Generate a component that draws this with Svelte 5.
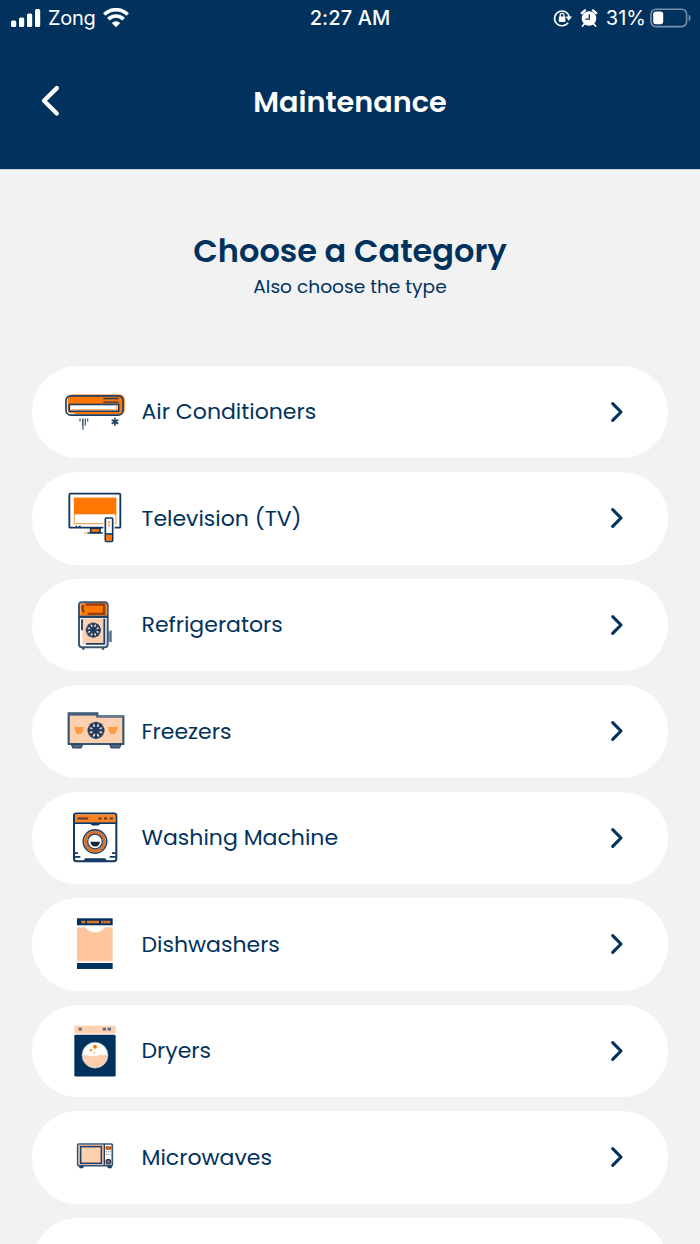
<script lang="ts">
	type Category = { name: string; icon: string; viewBox: string };

	const categories: Category[] = [
		{ name: 'Air Conditioners', icon: 'ac', viewBox: '0 -2.4 240 198' },
		{ name: 'Television (TV)', icon: 'tv', viewBox: '0 2.1 240 198' },
		{ name: 'Refrigerators', icon: 'fridge', viewBox: '0 0.6 240 198' },
		{ name: 'Freezers', icon: 'freezer', viewBox: '0 -3.9 240 198' },
		{ name: 'Washing Machine', icon: 'washer', viewBox: '0 0.6 240 198' },
		{ name: 'Dishwashers', icon: 'dishwasher', viewBox: '0 5.1 240 198' },
		{ name: 'Dryers', icon: 'dryer', viewBox: '0 0.6 240 198' },
		{ name: 'Microwaves', icon: 'microwave', viewBox: '0 -15.9 240 198' }
	];
</script>

{#snippet snowflake(cx: number, cy: number, r: number)}
	<g transform="translate({cx} {cy}) scale({r / 24})" stroke="#1f3f66" stroke-width="5" fill="none">
		<circle r="10" fill="#1f3f66" stroke="none" />
		{#each [0, 45, 90, 135, 180, 225, 270, 315] as angle}
			<path d="M0 0V-23M-7 -21L0 -15L7 -21" transform="rotate({angle})" />
		{/each}
	</g>
{/snippet}

<div class="screen">
	<div class="status-bar">
		<div class="carrier">
			<svg width="30" height="20" viewBox="0 0 30 20" fill="#fff">
				<rect x="0" y="12.5" width="5.2" height="6.5" rx="1.5" />
				<rect x="8" y="9.5" width="5.2" height="9.5" rx="1.5" />
				<rect x="16" y="5.5" width="5.2" height="13.5" rx="1.5" />
				<rect x="24" y="1" width="5.2" height="18" rx="1.5" />
			</svg>
			<span>Zong</span>
			<svg width="26" height="20" viewBox="0 0 26 20" fill="none" stroke="#fff" stroke-width="3.6">
				<path d="M1.3 6.6A16.4 16.4 0 0 1 24.7 6.6" />
				<path d="M5.4 11.2A10.6 10.6 0 0 1 20.6 11.2" />
				<path d="M13 19.3L8.8 15A6 6 0 0 1 17.2 15Z" fill="#fff" stroke="none" />
			</svg>
		</div>
		<span class="time">2:27 AM</span>
		<div class="indicators">
			<svg width="20" height="20" viewBox="0 0 20 20" fill="none" stroke="#fff" stroke-width="1.6">
				<path d="M15.1 14.6A7.4 7.4 0 1 1 16.3 9.2" />
				<path d="M12.6 8.5H19L15.8 12.7Z" fill="#fff" stroke="none" />
				<rect x="5.8" y="8.6" width="6.6" height="5.4" rx="0.8" fill="#fff" stroke="none" />
				<path d="M7.2 9V7.2A1.9 1.9 0 0 1 11 7.2V9" stroke-width="1.3" />
			</svg>
			<svg class="alarm" width="18" height="20" viewBox="0 0 18 20">
				<circle cx="9" cy="10.5" r="7.3" fill="#fff" />
				<path d="M1.8 5.2L5 2.4M16.2 5.2L13 2.4" stroke="#fff" stroke-width="2.4" stroke-linecap="round" />
				<path d="M4.3 16L2.5 18M13.7 16L15.5 18" stroke="#fff" stroke-width="1.8" stroke-linecap="round" />
				<path d="M9.3 6.3V11.2H5.4" fill="none" stroke="#01325d" stroke-width="1.3" />
			</svg>
			<span>31%</span>
			<svg width="42" height="20" viewBox="0 0 42 20">
				<rect x="1" y="1.2" width="35.6" height="17.4" rx="5" fill="none" stroke="#7890a9" stroke-width="1.6" />
				<rect x="3.2" y="3.5" width="10" height="12.8" rx="2.8" fill="#fff" />
				<path d="M38.6 6.7C41.2 8 41.2 11.9 38.6 13.2Z" fill="#7890a9" />
			</svg>
		</div>
	</div>

	<header>
		<button class="back" aria-label="Back">
			<svg width="20" height="32" viewBox="0 0 20 32" fill="none" stroke="#fff" stroke-width="4.3" stroke-linecap="round" stroke-linejoin="round">
				<path d="M16.8 3.1L4 15.8L16.8 28.5" />
			</svg>
		</button>
		<h1>Maintenance</h1>
	</header>

	<main>
		<h2>Choose a Category</h2>
		<p>Also choose the type</p>

		<ul>
			{#each categories as category}
				<li>
					<button class="category">
						<svg class="appliance" viewBox={category.viewBox}>
							{#if category.icon === 'ac'}
								<rect x="38" y="44" width="171" height="60" rx="15" fill="#ff7600" />
								<rect x="43" y="74" width="148" height="20" fill="#fff" stroke="#1f3f66" stroke-width="5" />
								<path d="M50 90H184V79" fill="none" stroke="#ff9a45" stroke-width="3" />
								<path d="M36 92V98Q36 103 47 103H60" fill="none" stroke="#fff" stroke-width="5" />
								<rect x="33" y="48" width="171" height="58" rx="14" fill="none" stroke="#1f3f66" stroke-width="5" />
								<path d="M145 56H191M145 67H191" stroke="#1f3f66" stroke-width="4" />
								<path d="M75 116V125M83 116V139M84 116V150M91 116V137M98 116V125" stroke="#34526f" stroke-width="3.5" />
								<path d="M180 114V138M170 120L190 132M190 120L170 132" stroke="#1f3f66" stroke-width="5" />
							{:else if category.icon === 'tv'}
								<rect x="43" y="28" width="153" height="102" rx="3" fill="#fff" stroke="#12365f" stroke-width="5.5" />
								<rect x="58" y="41" width="125" height="77" fill="#fff" stroke="#ffa052" stroke-width="3.5" />
								<rect x="57" y="41" width="126" height="49" fill="#ff7600" />
								<path d="M62 127H66M71 127H77" stroke="#12365f" stroke-width="6" />
								<rect x="107" y="132" width="28" height="13" fill="#ff7600" stroke="#12365f" stroke-width="5" />
								<path d="M97 146H145" stroke="#12365f" stroke-width="4" />
								<path d="M88 146H94" stroke="#ff9a45" stroke-width="4" />
								<rect x="145" y="96" width="34" height="78" fill="#fff" />
								<rect x="151" y="101" width="22" height="70" rx="3" fill="#fff" stroke="#12365f" stroke-width="5" />
								<rect x="153" y="151" width="18" height="18" fill="#ff7600" />
								<path d="M151 149H173" stroke="#12365f" stroke-width="5" />
								<path d="M162 111V117M162 120V126" stroke="#ff9a45" stroke-width="6" />
							{:else if category.icon === 'fridge'}
								<rect x="72" y="31" width="86" height="135" rx="9" fill="#fff" stroke="#3b5875" stroke-width="6" />
								<path d="M76 72V42Q76 34 84 34H147Q155 34 155 42V72Z" fill="#ff7600" />
								<path d="M92 38H147V66H98" fill="none" stroke="#95410d" stroke-width="7" />
								<path d="M85 40Q79 50 87 61" fill="none" stroke="#713f2b" stroke-width="6" />
								<rect x="82" y="80" width="67" height="78" fill="#ffd0ae" />
								<path d="M71 75H159" stroke="#1f3f66" stroke-width="7" />
								<path d="M81 82V115M148 81V156H93" fill="none" stroke="#1f3f66" stroke-width="5.5" />
								<path d="M85 167V174M144 167V174" stroke="#34526f" stroke-width="7" />
								<path d="M167 116V151" stroke="#526b83" stroke-width="6" />
								<path d="M162 119V149" stroke="#1f3f66" stroke-width="2.5" />
								{@render snowflake(115, 115, 24)}
							{:else if category.icon === 'freezer'}
								<path d="M41 42H127V51H205V134H41Z" fill="#ffd0ae" stroke="#365574" stroke-width="6.5" />
								<path d="M41 45H127" stroke="#44607c" stroke-width="8" />
								<path d="M128 52H205" stroke="#66798b" stroke-width="6" />
								<path d="M49 135H83L79 146H53ZM164 135H198L194 146H168Z" fill="#526b83" stroke="#1f3f66" stroke-width="3" />
								<path d="M58 83H87Q85 97 78 104H66Q59 97 58 83ZM159 83H188Q186 97 179 104H167Q160 97 159 83Z" fill="#ff9a45" />
								{@render snowflake(123, 93, 27)}
							{:else if category.icon === 'washer'}
								<rect x="57" y="26" width="127" height="143" rx="7" fill="#fff" stroke="#12365f" stroke-width="6" />
								<path d="M60 29H181V53H60Z" fill="#ff8120" />
								<path d="M57 55H184" stroke="#12365f" stroke-width="5" />
								<path d="M67 41H100M130 41H140M147 41H157M164 41H174" stroke="#633a32" stroke-width="6" />
								<path d="M106 55H136Q134 62 128 62H114Q108 62 106 55Z" fill="#12365f" />
								<circle cx="120" cy="110" r="35" fill="#fff" stroke="#1f3f66" stroke-width="5" />
								<circle cx="120" cy="110" r="28" fill="#fff" stroke="#db7126" stroke-width="9" />
								<circle cx="120" cy="110" r="22" fill="#fff" stroke="#1f3f66" stroke-width="4" />
								<path d="M106 111H135Q133 125 121 125Q108 125 106 111Z" fill="#172431" />
								<path d="M59 145H69M59 156H76M171 145H182M164 156H182" stroke="#12365f" stroke-width="5" />
								<path d="M84 168L91 160H150L157 168Z" fill="#12365f" />
							{:else if category.icon === 'dishwasher'}
								<rect x="66" y="27" width="107" height="21" fill="#01325d" />
								<path d="M79 38H91M96 38H132M138 38H166" stroke="#e47727" stroke-width="8" />
								<path d="M146 34V42M155 34V42" stroke="#6b4538" stroke-width="2" />
								<path d="M66 54H92C101 74 140 74 148 54H173V156H66Z" fill="#ffc69d" />
								<rect x="66" y="161" width="107" height="18" fill="#01325d" />
							{:else if category.icon === 'dryer'}
								<path d="M58 24H182V43Q182 47 178 47H62Q58 47 58 43Z" fill="#ffd0ae" />
								<path d="M71 34H80M143 34H153M158 34H168" stroke="#526b83" stroke-width="8" />
								<rect x="58" y="51" width="124" height="125" rx="4" fill="#01325d" />
								<circle cx="120" cy="112" r="39" fill="#fff" stroke="#7d96ae" stroke-width="2" />
								<path d="M83 113Q91 108 98 113T112 113Q120 117 128 113Q137 108 146 113Q152 109 157 113C155 162 87 162 83 113Z" fill="#ffd0ae" />
								<circle cx="120" cy="87" r="6" fill="#ff7600" />
								<circle cx="108" cy="97" r="4" fill="#ff9a45" />
								<circle cx="118" cy="105" r="2.5" fill="#ffae69" />
							{:else if category.icon === 'microwave'}
								<rect x="68" y="44" width="104" height="65" rx="3" fill="#fff" stroke="#365574" stroke-width="5" />
								<rect x="71" y="47" width="75" height="59" fill="#f5b892" />
								<rect x="77" y="52" width="62" height="50" fill="#ffd0ae" stroke="#1f3f66" stroke-width="4.5" />
								<path d="M148 43V109" stroke="#1f3f66" stroke-width="4" />
								<rect x="152" y="51" width="17" height="10" fill="#95410d" />
								<path d="M155 56H167" stroke="#ff7600" stroke-width="4" />
								<path d="M152 67H169M152 75H169" stroke="#9aa4ad" stroke-width="4" stroke-dasharray="4 3" />
								<circle cx="160" cy="97" r="7" fill="#95603f" stroke="#1f3f66" stroke-width="3.5" />
								<path d="M71 110H87L84 117H74ZM156 110H172L169 117H159Z" fill="#1f3f66" />
							{/if}
						</svg>
						<span class="name">{category.name}</span>
						<svg class="chevron" width="14" height="22" viewBox="0 0 14 22" fill="none" stroke="#01325d" stroke-width="3.1" stroke-linecap="round" stroke-linejoin="round">
							<path d="M2.7 2.6L11 11L2.7 19.4" />
						</svg>
					</button>
				</li>
			{/each}
			<li><button class="category" aria-label="More"></button></li>
		</ul>
	</main>
</div>

<style>
	:global(body) {
		background-color: #f2f2f2;
		overflow: hidden;
	}

	.screen {
		height: 1244px;
		overflow: hidden;
		background-color: #f2f2f2;
		color: #01325d;
		font-family: Poppins, Inter, sans-serif;
	}

	svg {
		display: block;
		flex-shrink: 0;
	}

	button {
		border: none;
		padding: 0;
		background: none;
		color: inherit;
		font: inherit;
		cursor: pointer;
	}

	.status-bar {
		display: grid;
		grid-template-columns: 1fr auto 1fr;
		align-items: center;
		height: 35px;
		padding: 0 9px 0 11px;
		background-color: #01325d;
		color: #fff;
		font-family: Inter, sans-serif;
		font-size: 20px;
	}

	.carrier,
	.indicators {
		display: flex;
		align-items: center;
	}

	.carrier span {
		margin: 0 8px 0 7px;
		letter-spacing: -0.3px;
	}

	.time {
		margin-right: 2px;
		font-weight: 500;
		letter-spacing: 0.1px;
	}

	.indicators {
		justify-content: flex-end;
		margin-right: -1px;
	}

	.alarm {
		margin: 0 8px 0 7px;
	}

	.indicators span {
		margin-right: 4px;
	}

	header {
		display: grid;
		grid-template-columns: 60px 1fr 60px;
		align-items: center;
		height: 132px;
		padding-bottom: 2px;
		border-bottom: 1px solid #c5d0df;
		background-color: #01325d;
		color: #fff;
	}

	.back {
		justify-self: end;
	}

	h1 {
		margin: 2px 0 0;
		font-size: 28.7px;
		font-weight: 600;
		text-align: center;
	}

	main {
		padding: 58px 32px 0;
		text-align: center;
	}

	h2 {
		margin: 0;
		font-size: 32px;
		font-weight: 600;
		line-height: 46px;
	}

	p {
		margin: 0;
		font-size: 18.6px;
		line-height: 26px;
	}

	ul {
		display: flex;
		flex-direction: column;
		gap: 14px;
		margin: 65.6px 0 0;
		padding: 0;
		list-style: none;
	}

	li {
		height: 92.5px;
	}

	.category {
		display: flex;
		align-items: center;
		width: 100%;
		height: 92.5px;
		padding: 0 44px 0 23px;
		border-radius: 46.25px;
		background-color: #fff;
		text-align: left;
	}

	.appliance {
		width: 80px;
		height: 66px;
		margin-right: 6.5px;
	}

	.name {
		flex: 1;
		font-size: 22px;
	}
</style>
